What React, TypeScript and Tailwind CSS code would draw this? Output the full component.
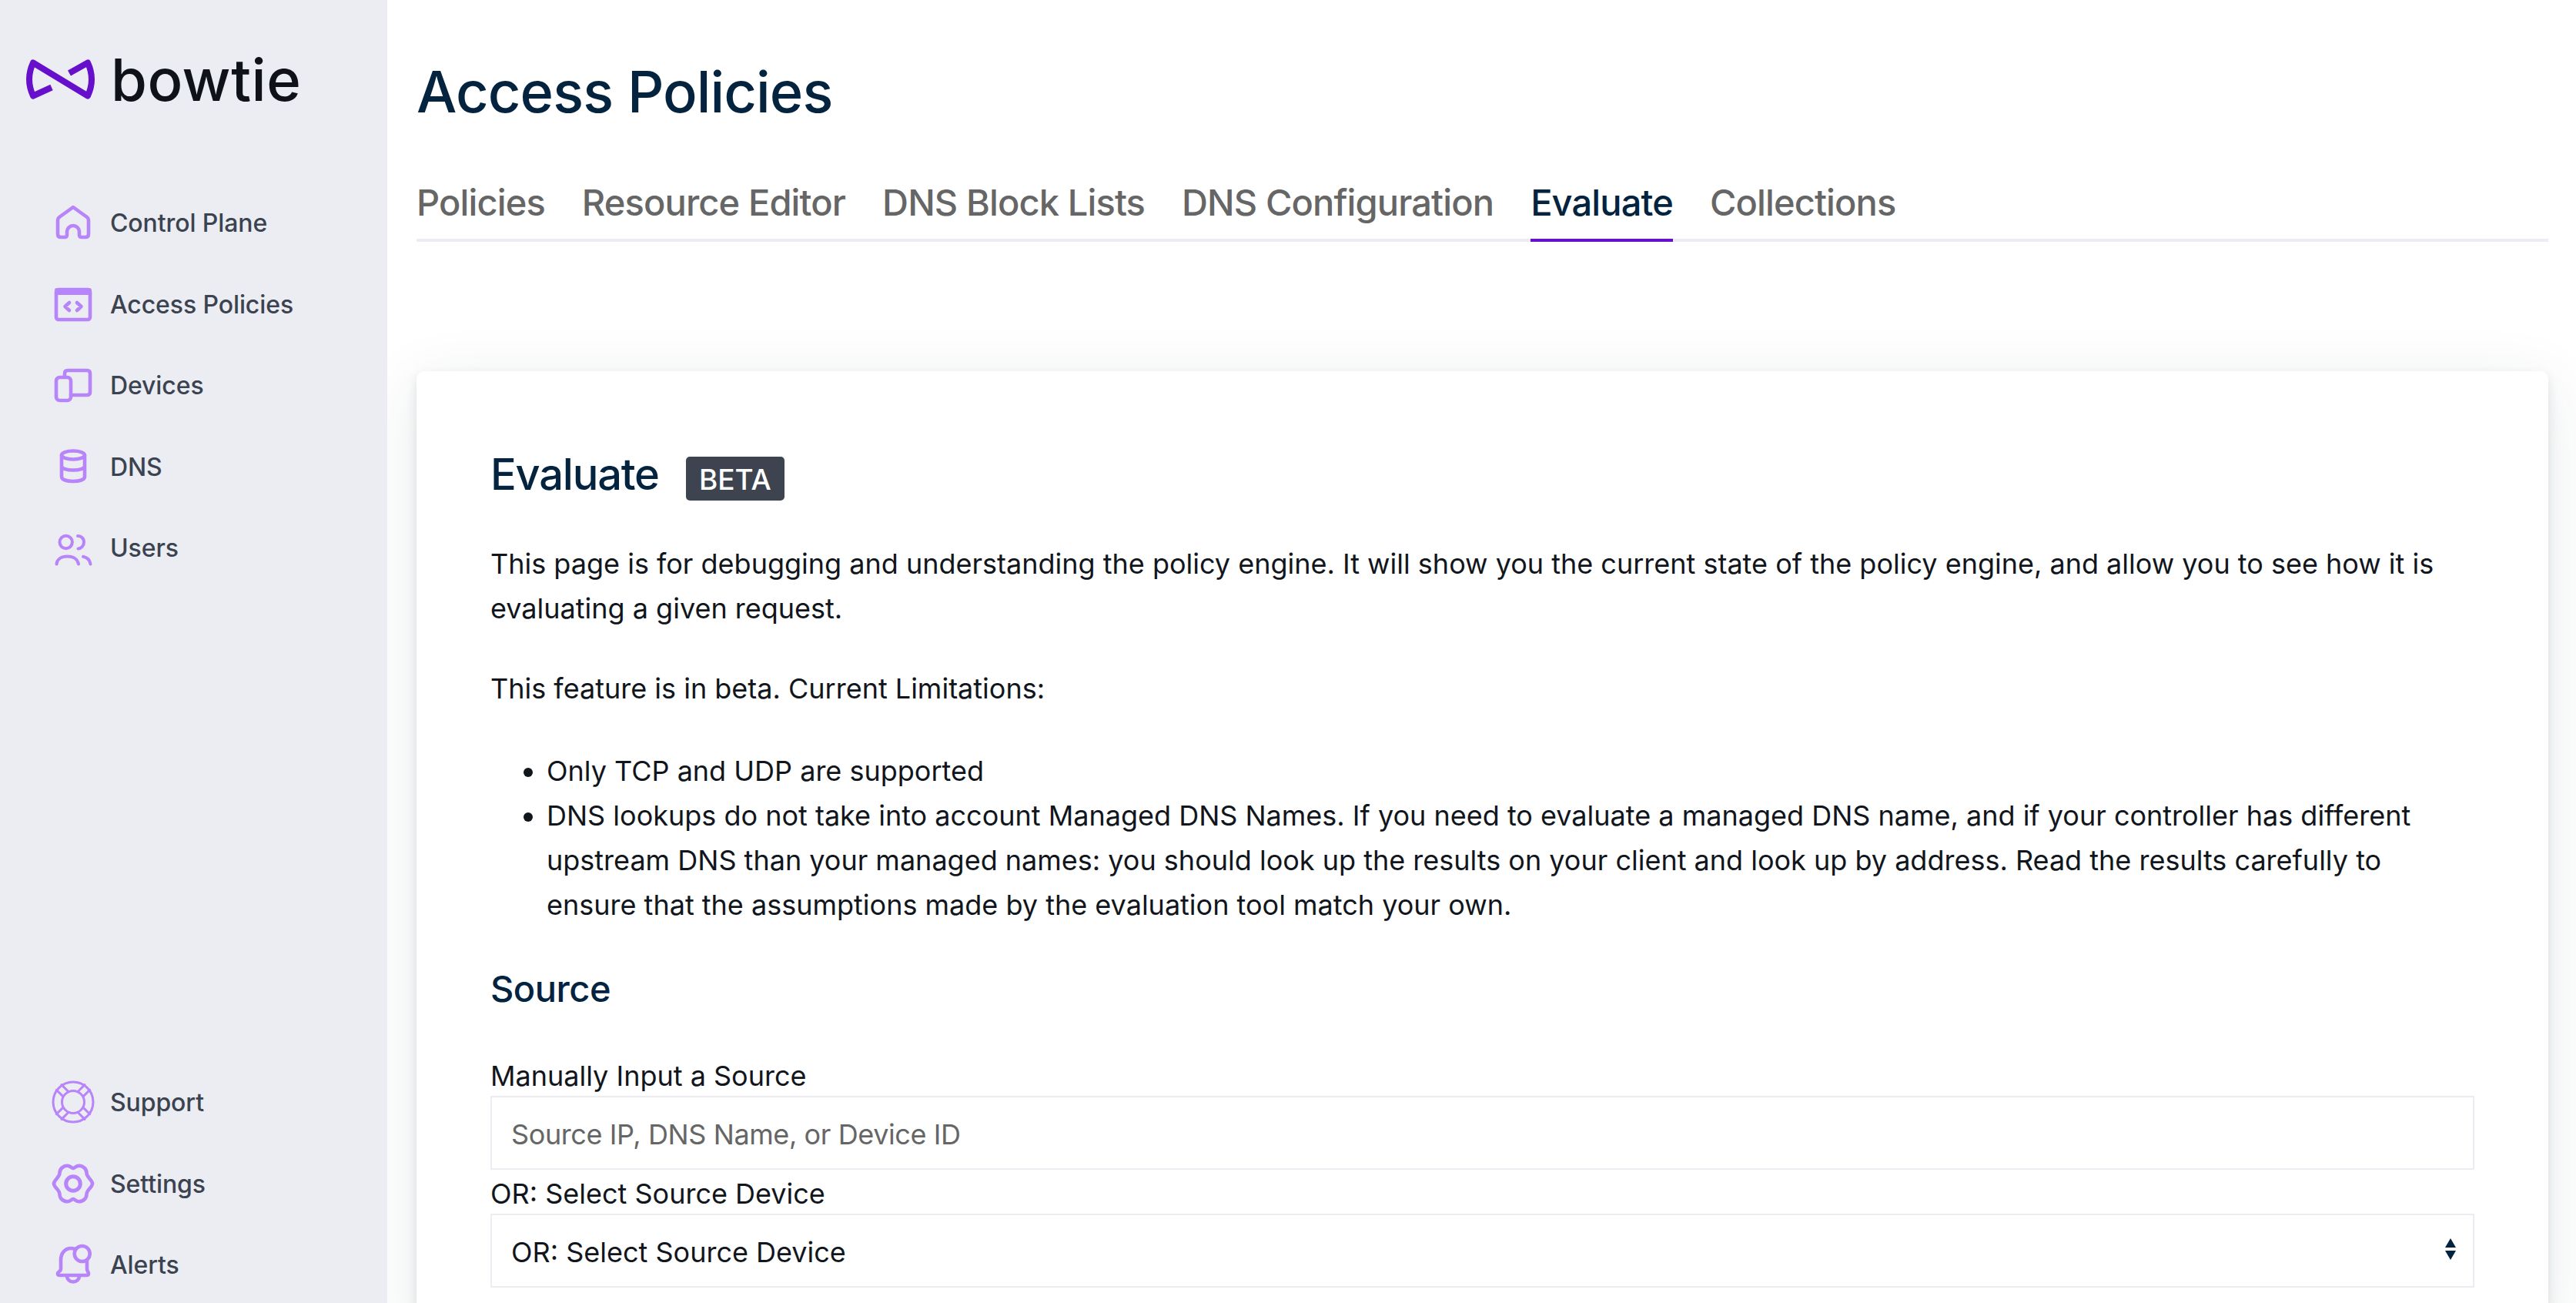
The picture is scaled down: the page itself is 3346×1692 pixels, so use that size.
import React from "react";

const iconProps = {
  width: 64,
  height: 64,
  viewBox: "0 0 64 64",
  fill: "none",
  stroke: "#B784F9",
  strokeWidth: 4.6,
  strokeLinecap: "round" as const,
  strokeLinejoin: "round" as const,
};

function HomeIcon() {
  return (
    <svg {...iconProps}>
      <path d="M32 11 L50 24 Q52 25.5 52 28.5 V46 Q52 50 48 50 H43 Q40 50 40 47 V43 A8 8 0 0 0 24 43 V47 Q24 50 21 50 H16 Q12 50 12 46 V28.5 Q12 25.5 14 24 Z" />
    </svg>
  );
}
function AccessIcon() {
  return (
    <svg {...iconProps}>
      <rect x="10" y="13" width="44" height="39" rx="3" />
      <rect x="9" y="12" width="46" height="7" rx="2" fill="#B784F9" stroke="#B784F9" strokeWidth="2" />
      <path d="M27 30 L21.5 35 L27 40 M37 30 L42.5 35 L37 40" />
    </svg>
  );
}
function DevicesIcon() {
  return (
    <svg {...iconProps}>
      <path d="M21 19 V16 Q21 12 25 12 H50 Q54 12 54 16 V40 Q54 44 50 44 H29" />
      <rect x="10" y="21" width="19" height="30" rx="4.5" />
    </svg>
  );
}
function DnsIcon() {
  return (
    <svg {...iconProps}>
      <ellipse cx="32" cy="17" rx="15" ry="5.5" />
      <path d="M17 17 V45 C17 49 24 51 32 51 C40 51 47 49 47 45 V17 M17 31 C17 34.5 24 36.5 32 36.5 C40 36.5 47 34.5 47 31" />
    </svg>
  );
}
function UsersIcon() {
  return (
    <svg {...iconProps} strokeWidth={4}>
      <circle cx="22.7" cy="24" r="8.2" />
      <path d="M38 16 C42 15.5 46 19 46 24 C46 29 42 32.5 38.5 32.5" />
      <path d="M10.5 52.5 C11 46.5 16 42.5 24.5 42.5 C33 42.5 38 46.5 39 52.5" />
      <path d="M45 42.8 C50 43.8 53.5 47 54.5 52.5" />
    </svg>
  );
}
function SupportIcon() {
  const segs = [
    [6.7, -14, 15, -22.4],
    [13.3, -7.4, 21.7, -15.7],
  ];
  return (
    <svg {...iconProps} strokeWidth={3}>
      <circle cx="32" cy="31" r="26" />
      <circle cx="32" cy="31" r="14.5" />
      {[1, -1].map((sx) =>
        [1, -1].map((sy) =>
          segs.map((s, i) => (
            <line
              key={`${sx}${sy}${i}`}
              x1={32 + sx * s[0]}
              y1={31 + sy * s[1]}
              x2={32 + sx * s[2]}
              y2={31 + sy * s[3]}
            />
          ))
        )
      )}
    </svg>
  );
}
function SettingsIcon() {
  const q = "M32 12 C34 12 36 8.7 39.5 8.7 C45 8.7 49.5 13 49.5 18 C49.5 24 57 27 57 32";
  return (
    <svg {...iconProps}>
      <path d={q} />
      <path d={q} transform="translate(64,0) scale(-1,1)" />
      <path d={q} transform="translate(0,64) scale(1,-1)" />
      <path d={q} transform="translate(64,64) scale(-1,-1)" />
      <circle cx="32" cy="32" r="9.3" strokeWidth="5" />
    </svg>
  );
}
function AlertsIcon() {
  return (
    <svg {...iconProps}>
      <circle cx="43.7" cy="17" r="10" />
      <path d="M35 11 C33 10.4 31 10 29 10 C21 10 16 17 16 25 V37 C16 40 12 40 12 43 C12 44.4 13 45 15 45 H49 C51 45 52 44.4 52 43 C52 40 50 40 50 37 V26.5" />
      <path d="M24 46 A8 7.5 0 0 0 40 46" />
    </svg>
  );
}

function NavItem({ icon, label }: { icon: React.ReactNode; label: string }) {
  return (
    <div className="flex h-[105.5px] items-center gap-4 pl-[63px] text-[32px] font-medium tracking-[-0.1px] text-[#3B4350]">
      {icon}
      <span className="pt-[1px]">{label}</span>
    </div>
  );
}

const tabs = ["Policies", "Resource Editor", "DNS Block Lists", "DNS Configuration", "Evaluate", "Collections"];

export default function App() {
  return (
    <div className="flex h-[1692px] w-[3346px] overflow-hidden bg-white font-['Inter',sans-serif]">
      <aside className="relative z-10 h-full w-[503px] shrink-0 overflow-hidden bg-[#ECEDF3]">
        <div className="mt-[77px] flex h-[53px] items-center gap-[19px] pl-[33px]">
          <svg width="92" height="53" viewBox="0 0 92 53" fill="none" stroke="#6610CC" strokeWidth="8" strokeLinejoin="round">
            <path d="M34 36.5 L10 47.5 Q0 26 10 4.5 L81 47.5 Q91 26 81 4.5 L57 18" />
          </svg>
          <span className="text-[76px] leading-[53px] font-[550] tracking-[0.5px] text-[#0F1218]">bowtie</span>
        </div>
        <nav className="mt-[107px]">
          <NavItem icon={<HomeIcon />} label="Control Plane" />
          <NavItem icon={<AccessIcon />} label="Access Policies" />
          <NavItem icon={<DevicesIcon />} label="Devices" />
          <NavItem icon={<DnsIcon />} label="DNS" />
          <NavItem icon={<UsersIcon />} label="Users" />
        </nav>
        <nav className="mt-[614.5px]">
          <NavItem icon={<SupportIcon />} label="Support" />
          <NavItem icon={<SettingsIcon />} label="Settings" />
          <NavItem icon={<AlertsIcon />} label="Alerts" />
        </nav>
      </aside>

      <main className="min-w-0 flex-1 pt-[79px] pr-[36px] pl-[38px]">
        <h1 className="text-[74px] leading-[81px] font-medium tracking-[-0.9px] text-[#03233F]">Access Policies</h1>
        <div className="mt-[72px] flex gap-[48px] border-b-4 border-[#EDECF4]">
          {tabs.map((t) => (
            <div
              key={t}
              className={
                t === "Evaluate"
                  ? "-mb-[4px] border-b-4 border-[#6610CC] pb-[17px] text-[47px] leading-[61px] font-medium tracking-[-0.87px] text-[#03233F]"
                  : "pb-[17px] text-[47px] leading-[61px] font-medium tracking-[-0.87px] text-[#666666]"
              }
            >
              {t}
            </div>
          ))}
        </div>

        <section className="mt-[168px] rounded-[10px] bg-white px-[96px] pt-[111px] pb-[60px] text-[36px] leading-[58px] text-[#11151C] shadow-[0_6px_14px_rgba(30,50,70,0.12),0_16px_80px_rgba(30,50,70,0.10)]">
          <div className="flex items-start gap-[35px]">
            <h2 className="text-[56px] leading-[47px] font-medium tracking-[-1.2px] text-[#03233F]">Evaluate</h2>
            <span className="flex h-[57px] w-[128px] items-center justify-center rounded-[5px] bg-[#3D4450] pt-[2px] text-[37px] leading-none font-medium text-white">BETA</span>
          </div>
          <p className="mt-[53px]">
            This page is for debugging and understanding the policy engine. It will show you the current state of the policy engine, and allow you to see how it is evaluating a given request.
          </p>
          <p className="mt-[46px]">This feature is in beta. Current Limitations:</p>
          <ul className="mt-[49px] list-disc pl-[73px]">
            <li>Only TCP and UDP are supported</li>
            <li>
              DNS lookups do not take into account Managed DNS Names. If you need to evaluate a managed DNS name, and if your controller has different upstream DNS than your managed names: you should look up the results on your client and look up by address. Read the results carefully to ensure that the assumptions made by the evaluation tool match your own.
            </li>
          </ul>
          <h3 className="mt-[50px] text-[47px] leading-[60px] font-medium tracking-[-0.5px] text-[#03233F]">Source</h3>
          <label className="mt-[58px] mb-[1px] block leading-[50px]">Manually Input a Source</label>
          <input
            className="block h-[96px] w-full border-2 border-[#ECECF2] bg-white px-[25px] pt-[3px] text-[36px] tracking-[-0.4px] outline-none placeholder:text-[#666666]"
            placeholder="Source IP, DNS Name, or Device ID"
          />
          <label className="mt-[6px] mb-[1px] block leading-[50px]">OR: Select Source Device</label>
          <div className="relative">
            <select className="block h-[96px] w-full appearance-none border-2 border-[#ECECF2] bg-white px-[25px] pt-[3px] text-[36px] text-[#11151C] outline-none">
              <option>OR: Select Source Device</option>
            </select>
            <svg className="absolute top-[32px] right-[24px]" width="14" height="28" viewBox="0 0 14 28" fill="#03233F">
              <path d="M7 0 L14 12 H0 Z M0 16 H14 L7 28 Z" />
            </svg>
          </div>
        </section>
      </main>
    </div>
  );
}
